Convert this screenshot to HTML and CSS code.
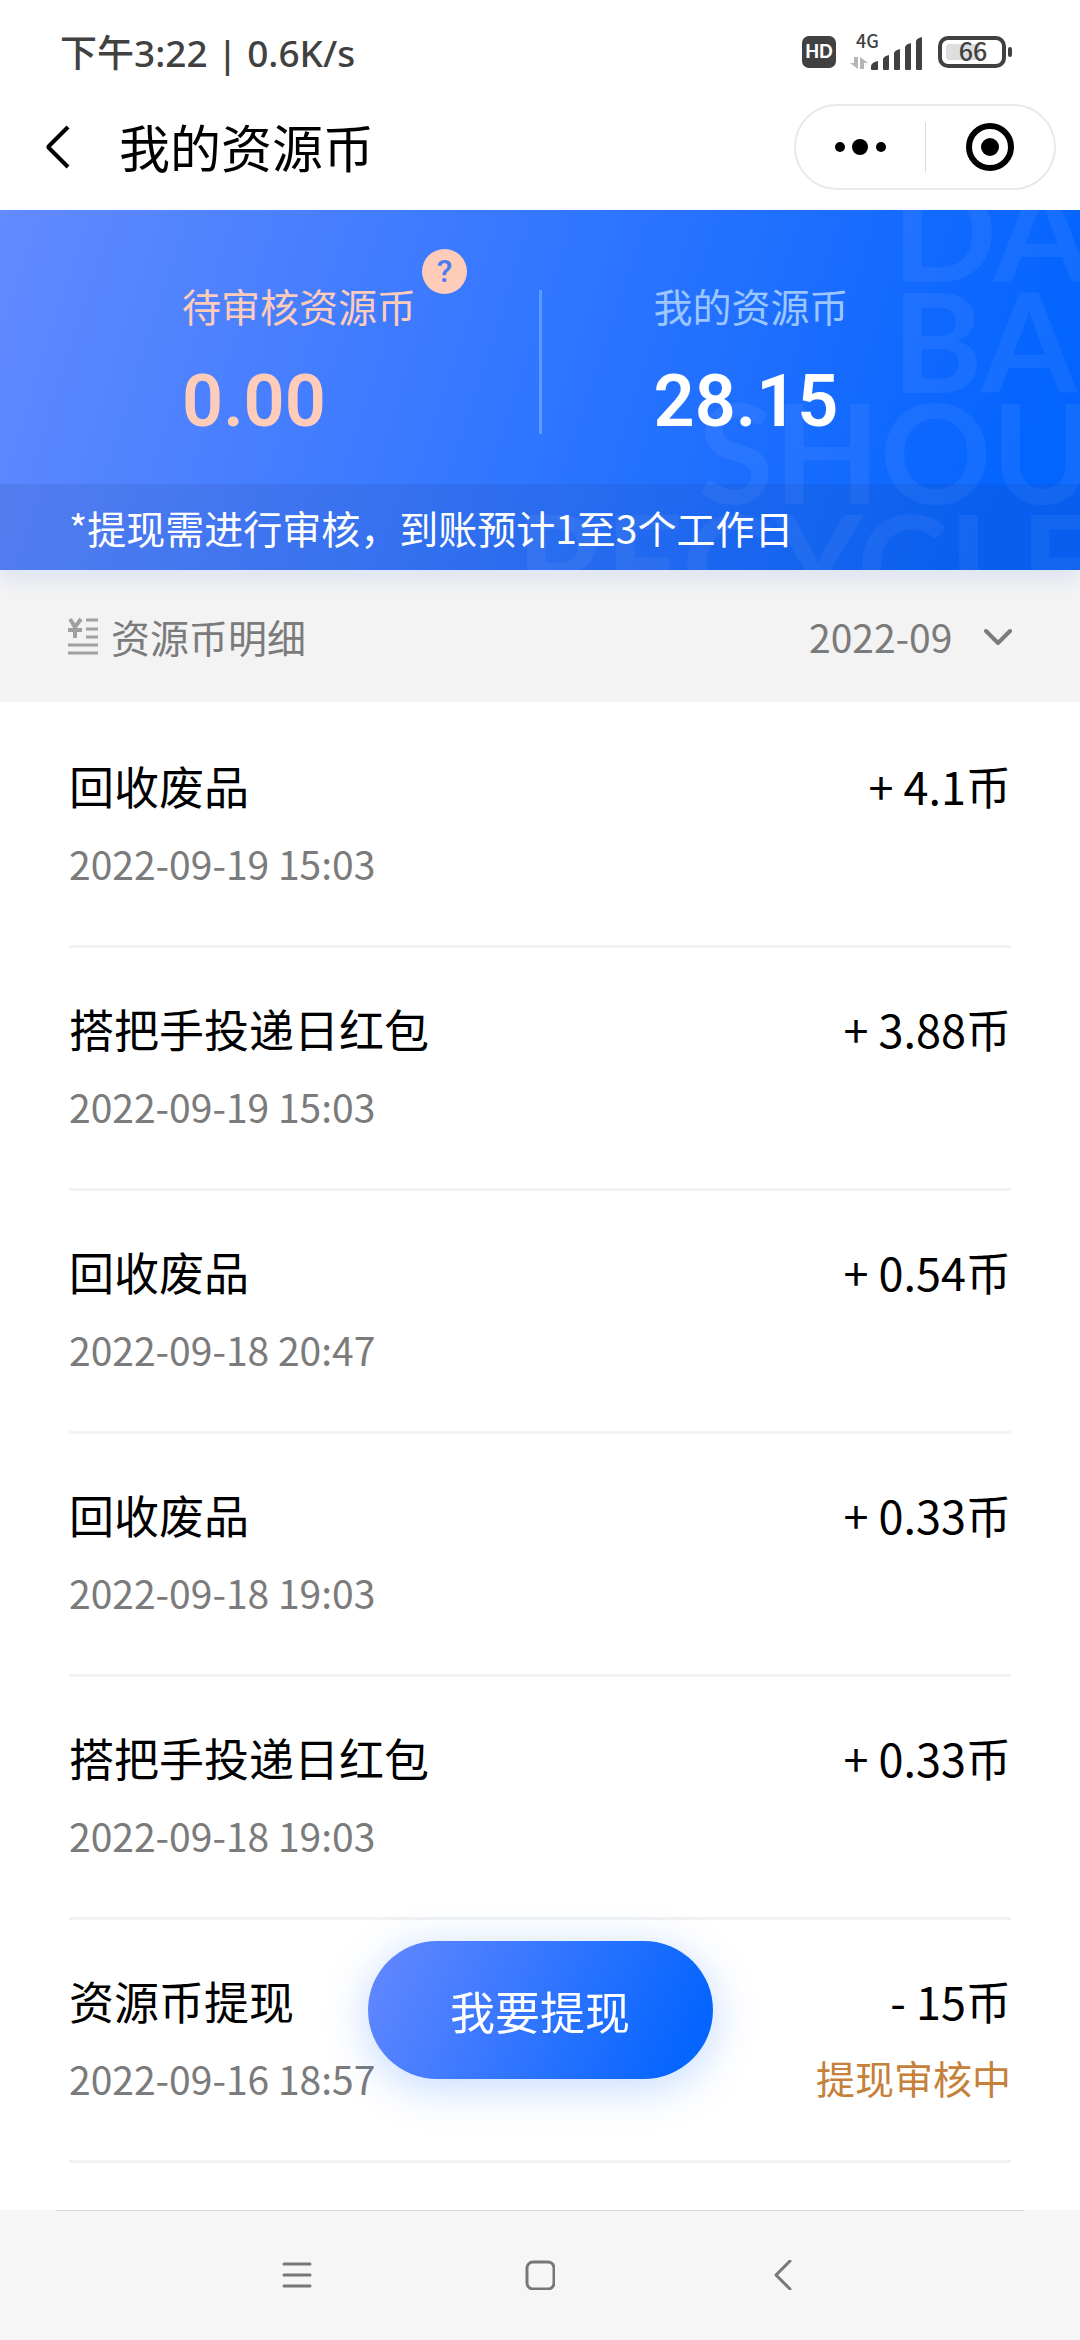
FILE: index.html
```html
<!DOCTYPE html>
<html lang="zh-CN">
<head>
<meta charset="utf-8">
<meta name="viewport" content="width=device-width, initial-scale=1">
<title>我的资源币</title>
<link rel="stylesheet" href="styles.css">
</head>
<body>
<div class="page">
  <div class="status-bar">
    <span class="status-time">下午3:22 | 0.6K/s</span>
    <div class="status-icons">
      <svg class="icon-hd" width="34" height="32" viewBox="0 0 34 32" role="img" aria-label="HD">
        <rect width="34" height="32" rx="7" fill="#414141"/>
        <text x="17" y="22" text-anchor="middle" font-size="18" font-weight="900" fill="#fff">HD</text>
      </svg>
      <svg class="icon-signal" width="74" height="38" viewBox="0 0 74 38" role="img" aria-label="4G">
        <text x="6" y="15" font-size="18" font-weight="500" fill="#414141">4G</text>
        <g fill="#b5b5b5">
          <path d="M4 24h4v12l-8-6h4zM10 36V24l8 6h-4v6z"/>
        </g>
        <g fill="#414141">
          <path d="M21 33q1-4 7-5v8a1 1 0 0 1-1 1h-5a1 1 0 0 1-1-1z"/>
          <path d="M33 26q1-3 6-4v14a1 1 0 0 1-1 1h-4a1 1 0 0 1-1-1z"/>
          <path d="M44 20q1-3 6-4v20a1 1 0 0 1-1 1h-4a1 1 0 0 1-1-1z"/>
          <path d="M55 14q1-3 6-4v26a1 1 0 0 1-1 1h-4a1 1 0 0 1-1-1z"/>
          <path d="M66 8q1-3 6-4v32a1 1 0 0 1-1 1h-4a1 1 0 0 1-1-1z"/>
        </g>
      </svg>
      <svg class="icon-battery" width="75" height="32" viewBox="0 0 75 32" role="img" aria-label="66%">
        <rect x="2" y="2" width="64" height="28" rx="8" fill="none" stroke="#414141" stroke-width="4"/>
        <rect x="8" y="8" width="34" height="16" rx="3" fill="#dedede"/>
        <rect x="70" y="11" width="4" height="10" rx="2" fill="#414141"/>
        <text x="35" y="25" text-anchor="middle" font-size="25" font-weight="500" fill="#414141">66</text>
      </svg>
    </div>
  </div>

  <header class="nav-header">
    <button class="back" type="button" aria-label="返回">
      <svg width="24" height="44" viewBox="0 0 24 44" fill="none" stroke="#000" stroke-width="4" stroke-linejoin="round"><path d="M22 2L3 21q-1 1 0 2L22 42"/></svg>
    </button>
    <h1 class="title">我的资源币</h1>
    <div class="capsule">
      <button type="button" aria-label="更多">
        <svg width="52" height="18" viewBox="0 0 52 18"><circle cx="6" cy="9" r="5"/><circle cx="26" cy="9" r="8"/><circle cx="47" cy="9" r="5"/></svg>
      </button>
      <span class="capsule-line"></span>
      <button type="button" aria-label="关闭">
        <svg width="48" height="48" viewBox="0 0 48 48"><circle cx="24" cy="24" r="21" fill="none" stroke="#000" stroke-width="6"/><circle cx="24" cy="24" r="9"/></svg>
      </button>
    </div>
  </header>

  <section class="hero">
    <div class="watermark" aria-hidden="true">
      <span class="mark mark-short mark-first">DA</span>
      <span class="mark mark-short">BA</span>
      <span class="mark mark-mid">SHOU</span>
      <span class="mark">RECYCLE</span>
    </div>
    <div class="balances">
      <div class="balance pending">
        <span class="balance-label">待审核资源币<button class="help" type="button" aria-label="说明">?</button></span>
        <span class="balance-value">0.00</span>
      </div>
      <span class="balance-line"></span>
      <div class="balance mine">
        <span class="balance-label">我的资源币</span>
        <span class="balance-value">28.15</span>
      </div>
    </div>
    <p class="notice">*提现需进行审核，到账预计1至3个工作日</p>
  </section>

  <div class="filter">
    <h2 class="filter-title">
      <svg width="30" height="38" viewBox="0 0 30 38" fill="none" stroke="#a0a0a0" stroke-width="3"><path d="M2 2l5 8 6-8M0 13h14M7 9v12" stroke-width="4"/><path d="M18 3h12M18 12h12M18 20h12M0 28h30M0 36h30"/></svg>
      资源币明细
    </h2>
    <label class="month">
      <select aria-label="月份"><option>2022-09</option></select>
      <svg width="28" height="18" viewBox="0 0 28 18" fill="none" stroke="#7b7b7b" stroke-width="4" stroke-linecap="round" stroke-linejoin="round"><path d="M2 4l12 12L26 4"/></svg>
    </label>
  </div>

  <ul class="records">
    <li class="record"><span class="name">回收废品</span><span class="amount">+ 4.1币</span><time class="time">2022-09-19 15:03</time></li>
    <li class="record"><span class="name">搭把手投递日红包</span><span class="amount">+ 3.88币</span><time class="time">2022-09-19 15:03</time></li>
    <li class="record"><span class="name">回收废品</span><span class="amount">+ 0.54币</span><time class="time">2022-09-18 20:47</time></li>
    <li class="record"><span class="name">回收废品</span><span class="amount">+ 0.33币</span><time class="time">2022-09-18 19:03</time></li>
    <li class="record"><span class="name">搭把手投递日红包</span><span class="amount">+ 0.33币</span><time class="time">2022-09-18 19:03</time></li>
    <li class="record"><span class="name">资源币提现</span><span class="amount">- 15币</span><time class="time">2022-09-16 18:57</time><span class="state">提现审核中</span></li>
  </ul>

  <div class="dock">
    <button class="withdraw" type="button">我要提现</button>
    <nav class="system-nav">
      <button type="button" aria-label="最近任务"><svg width="30" height="30" viewBox="0 0 30 30" stroke="#777" stroke-width="3" stroke-linecap="round"><path d="M2 4h26M2 15h26M2 26h26"/></svg></button>
      <button type="button" aria-label="主页"><svg width="30" height="30" viewBox="0 0 30 30" fill="none" stroke="#777" stroke-width="3"><rect x="2" y="2" width="27" height="27" rx="6"/></svg></button>
      <button type="button" aria-label="返回上一页"><svg width="30" height="30" viewBox="0 0 30 30" fill="none" stroke="#777" stroke-width="3" stroke-linecap="round" stroke-linejoin="round"><path d="M22 1L8 15l14 14"/></svg></button>
    </nav>
  </div>
</div>
</body>
</html>
```
FILE: styles.css
```css
* {
  box-sizing: border-box;
}

body {
  margin: 0;
  background: #fff;
  color: #000;
  font-family: "Noto Sans CJK SC", sans-serif;
  font-size: 39px;
}

button,
select {
  margin: 0;
  padding: 0;
  border: 0;
  background: none;
  color: inherit;
  font: inherit;
}

svg {
  display: block;
}

.page {
  display: flex;
  flex-direction: column;
  min-height: 100vh;
}

/* Status bar */
.status-bar {
  display: flex;
  align-items: center;
  justify-content: space-between;
  height: 104px;
  padding: 0 67px 0 60px;
}

.status-time {
  padding-bottom: 2px;
  color: #414141;
  font-family: "Noto Sans", "Noto Sans CJK SC", sans-serif;
  font-size: 37px;
  font-weight: 500;
}

.status-icons {
  display: flex;
  align-items: center;
  gap: 14px;
}

.icon-hd {
  font-family: Lato, sans-serif;
}

/* Title bar */
.nav-header {
  display: flex;
  align-items: center;
  padding: 0 24px 20px 46px;
}

.title {
  flex: 1;
  margin: 0 0 0 49px;
  padding-bottom: 3px;
  font-size: 51px;
  font-weight: 400;
  line-height: 72px;
}

.capsule {
  display: flex;
  align-items: center;
  width: 262px;
  height: 86px;
  border: 2px solid #e9e9e9;
  border-radius: 43px;
}

.capsule button {
  display: flex;
  flex: 1;
  justify-content: center;
}

.capsule-line {
  width: 1px;
  height: 50px;
  background: #dcdcdc;
}

/* Balance banner */
.hero {
  position: relative;
  z-index: 1;
  background: linear-gradient(108deg, #638aff 0%, #0464ff 92%);
  box-shadow: 0 8px 20px rgba(40, 110, 255, 0.12);
}

.watermark {
  position: absolute;
  inset: 0;
  display: flex;
  flex-direction: column;
  overflow: hidden;
  color: rgba(255, 255, 255, 0.06);
  font-family: Lato, sans-serif;
  font-size: 138px;
  font-weight: 700;
  line-height: 111px;
}

.mark {
  width: 564px;
  margin-left: auto;
  white-space: nowrap;
}

.mark-mid {
  width: 382px;
}

.mark-short {
  width: 188px;
}

.mark-first {
  margin-top: -37px;
}

.balances {
  position: relative;
  display: grid;
  grid-template-columns: minmax(0, 1fr) auto minmax(0, 1fr);
  height: 274px;
  padding-top: 66px;
}

.balance {
  display: flex;
  flex-direction: column;
}

.pending {
  padding-left: 182px;
  color: #ffccb9;
}

.mine {
  padding-left: 112px;
  color: #fff;
}

.balance-label {
  position: relative;
  align-self: flex-start;
  line-height: 58px;
}

.mine .balance-label {
  color: #9cc6ff;
}

.balance-value {
  font-family: Roboto, sans-serif;
  font-size: 72px;
  font-weight: 600;
  line-height: 136px;
}

.balance-line {
  width: 3px;
  height: 144px;
  margin-top: 14px;
  background: #5c9bff;
}

.help {
  position: absolute;
  bottom: 100%;
  left: 100%;
  width: 45px;
  height: 45px;
  margin: 0 0 -18px 6px;
  border-radius: 50%;
  background: #ffccb9;
  color: #4a7cf0;
  font-family: Roboto, sans-serif;
  font-size: 32px;
  font-weight: 500;
  line-height: 45px;
}

.notice {
  position: relative;
  margin: 0;
  padding: 14px 69px;
  background: rgba(30, 60, 120, 0.12);
  color: #fff;
  line-height: 58px;
}

/* Month filter */
.filter {
  display: flex;
  align-items: center;
  justify-content: space-between;
  height: 132px;
  padding: 0 68px;
  background: #f3f3f3;
  color: #7b7b7b;
}

.filter-title {
  display: flex;
  align-items: center;
  gap: 13px;
  margin: 0;
  font-size: 39px;
  font-weight: 400;
}

.month {
  display: flex;
  align-items: center;
  gap: 31px;
}

.month select {
  appearance: none;
}

/* Records */
.records {
  flex: 1;
  margin: 0;
  padding: 3px 69px 177px;
  list-style: none;
}

.record {
  display: grid;
  grid-template-columns: 1fr auto;
  row-gap: 14px;
  padding: 48px 0 52px;
  border-bottom: 3px solid #f2f2f2;
}

.name,
.amount {
  font-size: 45px;
  line-height: 66px;
}

.amount,
.state {
  text-align: right;
}

.time {
  color: #7b7b7b;
  line-height: 60px;
}

.state {
  color: #c5803a;
  line-height: 58px;
}

/* Bottom dock */
.dock {
  position: fixed;
  right: 0;
  bottom: 0;
  left: 0;
  display: flex;
  flex-direction: column;
  align-items: center;
  gap: 131px;
  pointer-events: none;
}

.dock button {
  pointer-events: auto;
}

.withdraw {
  width: 345px;
  height: 138px;
  border-radius: 69px;
  background: linear-gradient(115deg, #6086ff 5%, #0565ff 90%);
  box-shadow: 0 8px 44px rgba(20, 110, 255, 0.26);
  color: #fff;
  font-size: 45px;
}

.system-nav {
  display: flex;
  justify-content: center;
  align-self: stretch;
  height: 130px;
  background: linear-gradient(#dadada, #dadada) center top / calc(100% - 112px) 1px no-repeat #f6f6f6;
}

.system-nav button {
  display: flex;
  align-items: center;
  justify-content: center;
  width: 243px;
}
```
